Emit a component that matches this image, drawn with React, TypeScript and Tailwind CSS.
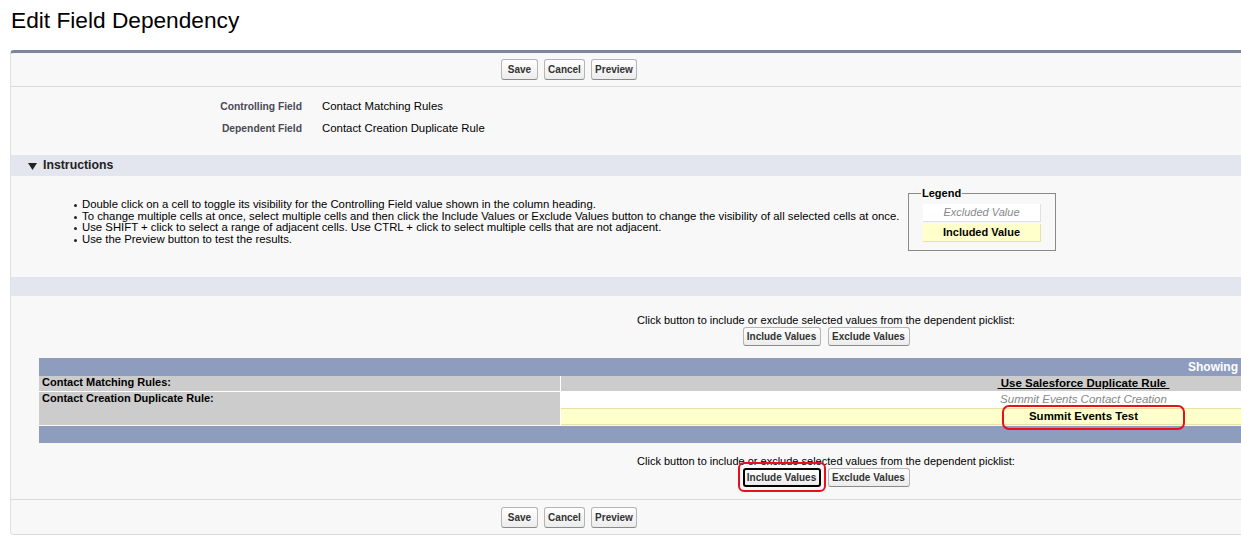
import React from "react";

const btnBase =
  "h-[19px] flex items-center justify-center rounded-[3px] bg-linear-to-b from-white to-[#ececec] text-[10px] font-bold text-[#333] leading-none";

const Btn = ({ children, w, focus = false }: { children: React.ReactNode; w: string; focus?: boolean }) => (
  <button
    className={
      focus
        ? `${btnBase} border-2 border-black ${w}`
        : `${btnBase} border border-[#b5b5b5] border-b-[#8a8a8a] ${w}`
    }
  >
    {children}
  </button>
);

const TopBtn = ({ children, w }: { children: React.ReactNode; w: string }) => (
  <button
    className={`h-[21px] flex items-center justify-center border border-[#b5b5b5] border-b-[#8a8a8a] rounded-[3px] bg-linear-to-b from-white to-[#ececec] text-[10px] font-bold text-[#333] leading-none ${w}`}
  >
    {children}
  </button>
);

const ButtonRow = () => (
  <div className="w-[1116px] flex justify-center gap-[6px]">
    <TopBtn w="w-[37px]">Save</TopBtn>
    <TopBtn w="w-[41px]">Cancel</TopBtn>
    <TopBtn w="w-[46px]">Preview</TopBtn>
  </div>
);

const IncludeRow = ({ annotated = false }: { annotated?: boolean }) => (
  <div className="w-[1630px] flex flex-col items-center">
    <div className="h-[12px] leading-[12px] text-[11px] text-black">
      Click button to include or exclude selected values from the dependent picklist:
    </div>
    <div className="mt-[1px] flex gap-[7px]">
      <div className="relative flex">
        <Btn w="w-[78px]" focus={annotated}>Include Values</Btn>
        {annotated && (
          <div className="absolute left-[-5px] top-[-6px] right-[-5px] bottom-[-5px] border-2 border-[#e8101a] rounded-[6px] pointer-events-none" />
        )}
      </div>
      <div className="flex">
        <Btn w="w-[82px]">Exclude Values</Btn>
      </div>
    </div>
  </div>
);

const Bullet = ({ children }: { children: React.ReactNode }) => (
  <li className="flex">
    <span className="mt-[5px] mr-[5px] w-[3px] h-[3px] bg-[#222] rounded-full shrink-0" />
    <span className="whitespace-nowrap">{children}</span>
  </li>
);

export default function App() {
  return (
    <div
      className="w-[1241px] h-[555px] overflow-hidden bg-white"
      style={{ fontFamily: '"Liberation Sans", Arial, sans-serif' }}
    >
      <div className="h-[50px] pl-[11px] pt-[6px]">
        <h1 className="text-[22.7px] leading-[28px] text-black font-normal">Edit Field Dependency</h1>
      </div>

      <div className="ml-[10px] w-[1300px] h-[485px] bg-[#f8f8f8] border-t-[3px] border-t-[#7b859e] border-l border-l-[#e0e0e0] border-b border-b-[#dadada] rounded-tl-[4px] rounded-bl-[4px] flex flex-col">
        {/* top buttons */}
        <div className="h-[34px] pt-[6px] border-b border-b-[#dbdbdb]">
          <ButtonRow />
        </div>

        {/* fields */}
        <div className="h-[68px] pt-[9px]">
          <div className="flex h-[22px] items-center">
            <div className="w-[291px] text-right text-[10.3px] font-bold text-[#4a4a56]">Controlling Field</div>
            <div className="ml-[20px] text-[11.4px] text-black">Contact Matching Rules</div>
          </div>
          <div className="flex h-[22px] items-center">
            <div className="w-[291px] text-right text-[10.3px] font-bold text-[#4a4a56]">Dependent Field</div>
            <div className="ml-[20px] text-[11.4px] text-black">Contact Creation Duplicate Rule</div>
          </div>
        </div>

        {/* instructions header */}
        <div className="h-[21px] bg-[#e3e6ee] flex items-center pl-[17px]">
          <svg width="9" height="8" viewBox="0 0 9 8" className="mr-[6px]">
            <polygon points="0,1 9,1 4.5,8" fill="#222" />
          </svg>
          <span className="text-[12.3px] font-bold text-[#222]">Instructions</span>
        </div>

        {/* instructions body */}
        <div className="h-[101px] flex">
          <ul className="pl-[63px] pt-[23px] w-[897px] text-[11.35px] leading-[11.7px] text-black">
            <Bullet>Double click on a cell to toggle its visibility for the Controlling Field value shown in the column heading.</Bullet>
            <Bullet>To change multiple cells at once, select multiple cells and then click the Include Values or Exclude Values button to change the visibility of all selected cells at once.</Bullet>
            <Bullet>Use SHIFT + click to select a range of adjacent cells. Use CTRL + click to select multiple cells that are not adjacent.</Bullet>
            <Bullet>Use the Preview button to test the results.</Bullet>
          </ul>
          <fieldset className="mt-[11px] h-[64px] w-[147px] border border-[#8a8a8a] px-[14px] pb-[10px]">
            <legend className="text-[11px] font-bold text-black px-[1px] leading-[12px] -ml-[2px]">Legend</legend>
            <div className="mt-[5px] h-[18px] w-[118px] bg-white border-r border-b border-[#e0e0e0] text-center text-[11px] italic text-[#888] leading-[17px]">
              Excluded Value
            </div>
            <div className="mt-[2px] h-[18px] w-[118px] bg-[#ffffcc] border-r border-b border-[#e8e2a8] text-center text-[11px] font-bold text-black leading-[17px]">
              Included Value
            </div>
          </fieldset>
        </div>

        {/* gray bar */}
        <div className="h-[19px] bg-[#e3e6ee]" />

        {/* content */}
        <div className="h-[203px] pt-[18px]">
          <IncludeRow />

          <div className="mt-[12px] ml-[28px] w-[1568px] text-[11px]">
            <div className="h-[18px] bg-[#8e9dbe] flex items-center">
              <span className="ml-[1149px] font-bold text-white text-[12px] whitespace-nowrap">Showing</span>
            </div>
            <div className="flex">
              <div className="w-[522px] border-r border-white flex flex-col">
                <div className="h-[16px] bg-[#cccccc] border-b border-white pl-[3px] font-bold text-black leading-[13px]">
                  Contact Matching Rules:
                </div>
                <div className="h-[33px] bg-[#cccccc] pl-[3px] font-bold text-black leading-[13px]">
                  Contact Creation Duplicate Rule:
                </div>
              </div>
              <div className="w-[1045px] flex flex-col">
                <div className="h-[16px] bg-[#cccccc] border-b border-white flex justify-center items-center">
                  <span className="font-bold text-black underline text-[11.5px] whitespace-pre"> Use Salesforce Duplicate Rule </span>
                </div>
                <div className="h-[16px] bg-white flex justify-center items-center">
                  <span className="italic text-[#888] text-[11.5px]">Summit Events Contact Creation</span>
                </div>
                <div className="h-[17px] bg-[#ffffcc] border-t border-b border-[#e8e2a8] flex justify-center items-center">
                  <span className="relative font-bold text-black text-[11.5px]">
                    Summit Events Test
                    <span className="absolute left-[-27px] right-[-47px] top-[-3px] bottom-[-5px] border-2 border-[#e8101a] rounded-[7px]" />
                  </span>
                </div>
              </div>
            </div>
            <div className="mt-[1px] h-[17px] bg-[#8e9dbe]" />
          </div>

          <div className="mt-[12px]">
            <IncludeRow annotated />
          </div>
        </div>

        {/* bottom buttons */}
        <div className="h-[35px] pt-[7px] border-t border-t-[#dbdbdb]">
          <ButtonRow />
        </div>
      </div>
    </div>
  );
}
